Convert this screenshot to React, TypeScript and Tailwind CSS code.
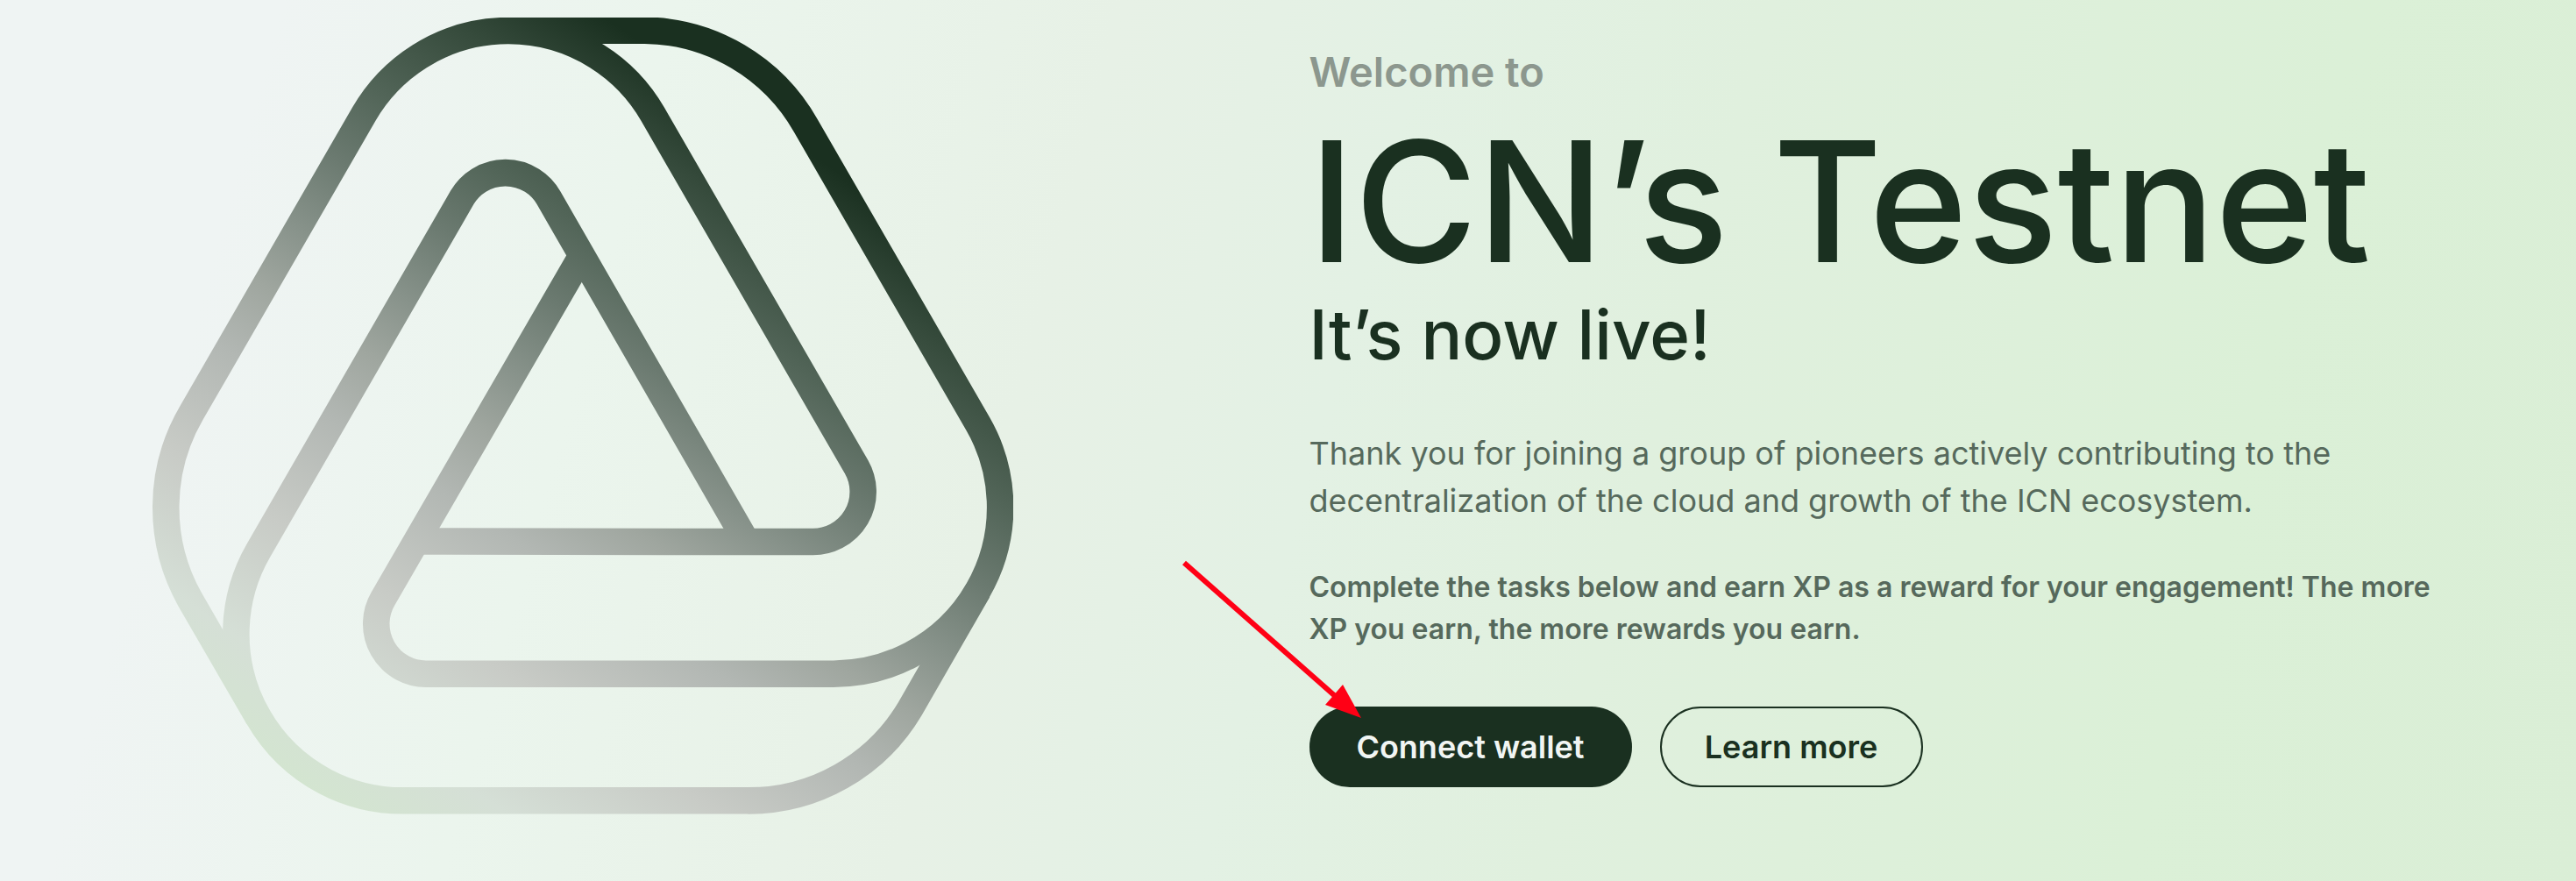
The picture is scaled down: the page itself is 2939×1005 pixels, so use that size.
// One strand of the mark, drawn around the centre of the figure; the other two are turns of it.
const STRAND =
  'M452 164.500L374.400 299.300A214 214 0 0 1 189 404H-203.800A190 190 0 0 1 -368.300 119L-136 -283.500A57 57 0 0 1 -37.500 -283L187.900 108.500';

function PenroseMark() {
  return (
    <svg viewBox="174 20 982 908" role="img" aria-label="ICN logo" className="h-auto w-full">
      <defs>
        <linearGradient id="mark-tone" gradientUnits="userSpaceOnUse" x1="300" y1="868" x2="808" y2="98">
          <stop offset="0" stopColor="#d3e5d0" />
          <stop offset="0.113" stopColor="#d5dfd6" />
          <stop offset="0.259" stopColor="#c8cbc6" />
          <stop offset="0.402" stopColor="#b2b7b3" />
          <stop offset="0.493" stopColor="#9fa69f" />
          <stop offset="0.576" stopColor="#87928a" />
          <stop offset="0.672" stopColor="#6b7a70" />
          <stop offset="0.769" stopColor="#526558" />
          <stop offset="0.891" stopColor="#364b3c" />
          <stop offset="1" stopColor="#1a3020" />
        </linearGradient>
        <mask id="mark-shape" maskUnits="userSpaceOnUse" x="160" y="0" width="1010" height="950">
          <g transform="translate(664 508.5)" fill="none" stroke="#fff" strokeWidth="30.5">
            <path d={STRAND} />
            <path d={STRAND} transform="rotate(120)" />
            <path d={STRAND} transform="rotate(240)" />
          </g>
        </mask>
      </defs>
      <rect x="160" y="0" width="1010" height="950" fill="url(#mark-tone)" mask="url(#mark-shape)" />
    </svg>
  );
}

function PointerArrow() {
  return (
    <svg
      viewBox="0 0 208 184"
      aria-hidden="true"
      className="pointer-events-none absolute -top-[168px] -left-[146px] h-[184px] w-[208px]"
    >
      <path d="M3 4L182 162" stroke="#ff0015" strokeWidth="6" />
      <path d="M205 181L184 143L164 166Z" fill="#ff0015" />
    </svg>
  );
}

export default function App() {
  return (
    <main className="grid min-h-screen grid-cols-2 gap-12 bg-[linear-gradient(105deg,#eff4f3_0%,#eff4f3_10%,#ebf5ed_24%,#e7f1e6_40%,#e3f1e4_51%,#e0f0de_63%,#dbf0d7_84%,#daeed6_100%)] font-['Inter',sans-serif] text-[#1a3020]">
      <div className="pt-5 pr-[20%] pl-[12%]">
        <PenroseMark />
      </div>
      <section className="pt-[50px]">
        <p className="text-[47px] leading-[64px] font-semibold text-[#8c978e]">Welcome to</p>
        <h1 className="mt-5 text-[191px] leading-[192px] font-medium whitespace-nowrap">ICN’s Testnet</h1>
        <h2 className="mt-4 text-[78px] leading-[80px] font-medium">It’s now live!</h2>
        <p className="mt-[68px] max-w-[1200px] text-[36px] leading-[54px] text-[#56695c]">
          Thank you for joining a group of pioneers actively contributing to the decentralization of the cloud and
          growth of the ICN ecosystem.
        </p>
        <p className="mt-12 max-w-[1300px] text-[32px] leading-[48px] font-semibold text-[#56695c]">
          Complete the tasks below and earn XP as a reward for your engagement! The more XP you earn, the more rewards
          you earn.
        </p>
        <div className="relative mt-16 flex gap-8">
          <button type="button" className="h-[92px] w-[368px] rounded-full bg-[#1a3020] text-[36px] font-semibold text-[#f1f5f3]">
            Connect wallet
          </button>
          <button type="button" className="h-[92px] w-[300px] rounded-full border-2 border-[#1a3020] text-[36px] font-semibold">
            Learn more
          </button>
          <PointerArrow />
        </div>
      </section>
    </main>
  );
}
